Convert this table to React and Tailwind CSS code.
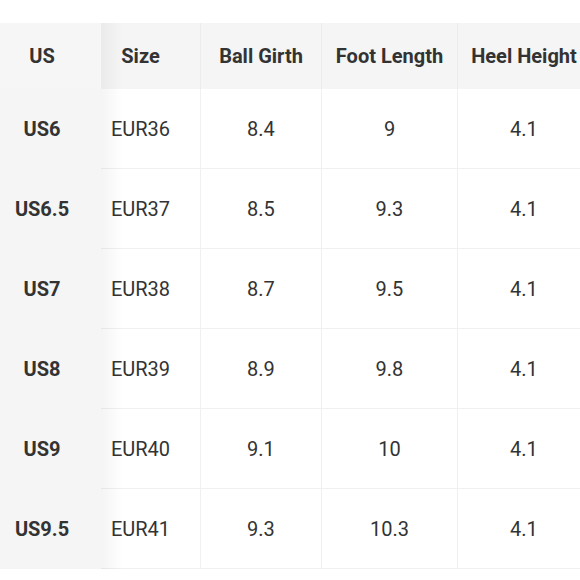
import React from "react";

const rows = [
  ["US6", "EUR36", "8.4", "9", "4.1"],
  ["US6.5", "EUR37", "8.5", "9.3", "4.1"],
  ["US7", "EUR38", "8.7", "9.5", "4.1"],
  ["US8", "EUR39", "8.9", "9.8", "4.1"],
  ["US9", "EUR40", "9.1", "10", "4.1"],
  ["US9.5", "EUR41", "9.3", "10.3", "4.1"],
];

export default function App() {
  return (
    <div
      className="w-[580px] h-[580px] bg-white overflow-hidden pt-[23px] text-[#333333]"
      style={{ fontFamily: "Roboto, 'Liberation Sans', sans-serif" }}
    >
      <div className="relative w-[620px] text-[20px]">
        <div className="flex h-[66px] bg-[#f5f5f5] font-bold">
          <div className="w-[101px] shrink-0 flex items-center justify-center pr-[17px] bg-[#f6f6f6]">US</div>
          <div className="w-[100px] shrink-0 flex items-center justify-center pr-[20px] border-r border-[#ececec]">Size</div>
          <div className="w-[121px] shrink-0 flex items-center justify-center border-r border-[#ececec]">Ball Girth</div>
          <div className="w-[136px] shrink-0 flex items-center justify-center border-r border-[#ececec]">Foot Length</div>
          <div className="w-[132px] shrink-0 flex items-center justify-center">Heel Height</div>
        </div>
        {rows.map((r, i) => (
          <div key={i} className="flex h-[80px]">
            <div className="w-[101px] shrink-0 flex items-center justify-center pr-[17px] bg-[#f5f5f5] font-bold">{r[0]}</div>
            <div className="w-[100px] shrink-0 flex items-center justify-center pr-[20px] border-r border-b border-[#f0f0f0]">{r[1]}</div>
            <div className="w-[121px] shrink-0 flex items-center justify-center border-r border-b border-[#f0f0f0]">{r[2]}</div>
            <div className="w-[136px] shrink-0 flex items-center justify-center border-r border-b border-[#f0f0f0]">{r[3]}</div>
            <div className="w-[142px] shrink-0 flex items-center justify-center pr-[10px] border-b border-[#f0f0f0]">{r[4]}</div>
          </div>
        ))}
        <div className="absolute left-[101px] top-0 bottom-0 w-[22px] bg-gradient-to-r from-[rgba(0,0,0,0.045)] to-transparent pointer-events-none" />
      </div>
    </div>
  );
}
